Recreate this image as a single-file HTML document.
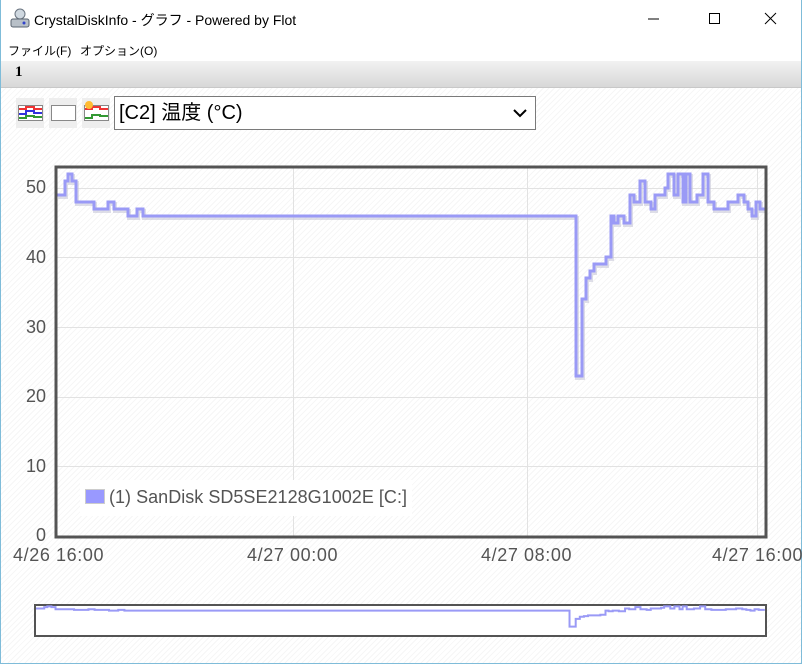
<!DOCTYPE html>
<html><head><meta charset="utf-8"><style>
body{margin:0;width:802px;height:664px;overflow:hidden;background:#fff;font-family:"Liberation Sans","Noto Sans CJK JP",sans-serif;position:relative}
.win{position:absolute;left:0;top:0;width:800px;height:663px;border:1px solid #7fbcd9;border-top:none}
.title{position:absolute;left:34px;top:10px;font-size:14px;color:#000}
.menu{position:absolute;top:42px;font-size:12px;color:#000;white-space:nowrap}
.tab{position:absolute;left:1px;top:61px;width:800px;height:26px;background:linear-gradient(#f2f2f2,#d8d8d8);border-bottom:1px solid #c8c8c8}
.content{position:absolute;left:1px;top:88px;width:800px;height:575px;background:repeating-linear-gradient(135deg,#fff 0 3px,#f6f6f6 3px 4px)}
.btn{position:absolute;top:98px;width:28px;height:30px;background:#eee}
.sel{position:absolute;left:114px;top:96px;border:1px solid #7a7a7a;background:#fff;font-size:20px;line-height:32px;padding-left:4px;box-sizing:border-box;width:422px;height:34px}
.lbl{position:absolute;font-size:18px;color:#545454;white-space:nowrap}
.tk{letter-spacing:0.6px}
</style></head><body>
<div class="win"></div>
<svg style="position:absolute;left:9px;top:7px" width="22" height="22" viewBox="0 0 22 22"><circle cx="11" cy="7" r="5" fill="#cfd8e0" stroke="#6a7480"/><rect x="2" y="12" width="18" height="8" rx="2" fill="#b8c0c8" stroke="#5a6470"/><circle cx="15" cy="16" r="1.5" fill="#3344cc"/></svg>
<div class="title">CrystalDiskInfo - グラフ - Powered by Flot</div>
<svg style="position:absolute;left:648px;top:12px" width="140" height="14"><line x1="0" y1="7" x2="11" y2="7" stroke="#000"/><rect x="61.5" y="1.5" width="10" height="10" fill="none" stroke="#000"/><path d="M117 1 L128 12 M128 1 L117 12" stroke="#000"/></svg>
<div class="menu" style="left:8px">ファイル(F)</div>
<div class="menu" style="left:80px">オプション(O)</div>
<div class="tab"><span style="position:absolute;left:14px;top:3px;font-family:'Liberation Serif',serif;font-weight:bold;font-size:15px">1</span></div>
<div class="content"></div>
<div class="btn" style="left:16px"><svg width="28" height="30"><rect x="2.5" y="7.5" width="24" height="15" fill="#fff" stroke="#888"/><path d="M3 11 H10 V9 H18 V11 H26" stroke="#e33" stroke-width="2" fill="none"/><path d="M3 16 H10 V13 H18 V15 H26" stroke="#33d" stroke-width="2" fill="none"/><path d="M3 20 H10 V18 H18 V19 H26" stroke="#393" stroke-width="2" fill="none"/></svg></div>
<div class="btn" style="left:49px"><svg width="28" height="30"><rect x="2.5" y="7.5" width="24" height="15" fill="#fff" stroke="#888"/></svg></div>
<div class="btn" style="left:82px"><svg width="28" height="30"><rect x="2.5" y="7.5" width="24" height="15" fill="#fff" stroke="#888"/><path d="M3 11 H10 V9 H18 V11 H26" stroke="#e33" stroke-width="2" fill="none"/><path d="M3 20 H10 V17 H18 V18 H26" stroke="#393" stroke-width="2" fill="none"/><circle cx="7" cy="7" r="4" fill="#fb3"/></svg></div>
<div class="sel">[C2] 温度 (°C)<svg style="position:absolute;right:8px;top:12px" width="14" height="9"><path d="M1 1 L7 7 L13 1" stroke="#000" stroke-width="2" fill="none"/></svg></div>
<svg style="position:absolute;left:0;top:0" width="802" height="664">
<g stroke="#e2e2e2" stroke-width="1">
<line x1="56" y1="188.5" x2="767" y2="188.5"/><line x1="56" y1="257.5" x2="767" y2="257.5"/><line x1="56" y1="327.5" x2="767" y2="327.5"/><line x1="56" y1="397.5" x2="767" y2="397.5"/><line x1="56" y1="466.5" x2="767" y2="466.5"/>
<line x1="293.5" y1="167" x2="293.5" y2="537"/><line x1="527.5" y1="167" x2="527.5" y2="537"/><line x1="757.5" y1="167" x2="757.5" y2="537"/>
</g>
<path d="M57 195 H65 V181 H68 V174 H72 V181 H76 V202 H94 V209 H108 V202 H114 V209 H128 V216 H137 V209 H143 V216 H576 V376 H582 V299 H586 V278 H590 V271 H594 V264 H606 V257 H611 V216 H614 V223 H618 V216 H624 V223 H630 V195 H634 V202 H640 V181 H645 V202 H651 V209 H655 V195 H665 V188 H668 V174 H674 V195 H678 V174 H683 V202 H686 V174 H690 V202 H697 V195 H703 V174 H708 V202 H714 V209 H728 V202 H738 V195 H744 V202 H748 V209 H752 V216 H756 V202 H760 V209 H766" fill="none" stroke="#c8c8d8" stroke-width="4" transform="translate(1,2)" opacity="0.6"/>
<path d="M57 195 H65 V181 H68 V174 H72 V181 H76 V202 H94 V209 H108 V202 H114 V209 H128 V216 H137 V209 H143 V216 H576 V376 H582 V299 H586 V278 H590 V271 H594 V264 H606 V257 H611 V216 H614 V223 H618 V216 H624 V223 H630 V195 H634 V202 H640 V181 H645 V202 H651 V209 H655 V195 H665 V188 H668 V174 H674 V195 H678 V174 H683 V202 H686 V174 H690 V202 H697 V195 H703 V174 H708 V202 H714 V209 H728 V202 H738 V195 H744 V202 H748 V209 H752 V216 H756 V202 H760 V209 H766" fill="none" stroke="#9a9af6" stroke-width="3"/>
<rect x="80" y="480" width="332" height="36" fill="#fff"/>
<rect x="85.5" y="489.5" width="19" height="14" fill="#9999ff" stroke="#ccc"/>
<text x="109" y="503" font-size="18" fill="#545454" font-family="Liberation Sans,sans-serif" textLength="298">(1) SanDisk SD5SE2128G1002E [C:]</text>
<rect x="56" y="167" width="710" height="370" fill="none" stroke="#545454" stroke-width="3"/>
<rect x="35" y="605" width="731" height="31" fill="#fff" stroke="#545454" stroke-width="2"/>
<path d="M57 195 H65 V181 H68 V174 H72 V181 H76 V202 H94 V209 H108 V202 H114 V209 H128 V216 H137 V209 H143 V216 H576 V376 H582 V299 H586 V278 H590 V271 H594 V264 H606 V257 H611 V216 H614 V223 H618 V216 H624 V223 H630 V195 H634 V202 H640 V181 H645 V202 H651 V209 H655 V195 H665 V188 H668 V174 H674 V195 H678 V174 H683 V202 H686 V174 H690 V202 H697 V195 H703 V174 H708 V202 H714 V209 H728 V202 H738 V195 H744 V202 H748 V209 H752 V216 H756 V202 H760 V209 H766" fill="none" stroke="#9a9af6" stroke-width="2" vector-effect="non-scaling-stroke" transform="translate(36,604) scale(1.028,0.1) translate(-57,-150)"/>
</svg>
<div class="lbl" style="left:26px;top:177px">50</div>
<div class="lbl" style="left:26px;top:247px">40</div>
<div class="lbl" style="left:26px;top:317px">30</div>
<div class="lbl" style="left:26px;top:386px">20</div>
<div class="lbl" style="left:26px;top:456px">10</div>
<div class="lbl" style="left:36px;top:525px">0</div>
<div class="lbl tk" style="left:13px;top:545px">4/26 16:00</div>
<div class="lbl tk" style="left:247px;top:545px">4/27 00:00</div>
<div class="lbl tk" style="left:481px;top:545px">4/27 08:00</div>
<div class="lbl tk" style="left:712px;top:545px">4/27 16:00</div>
</body></html>
